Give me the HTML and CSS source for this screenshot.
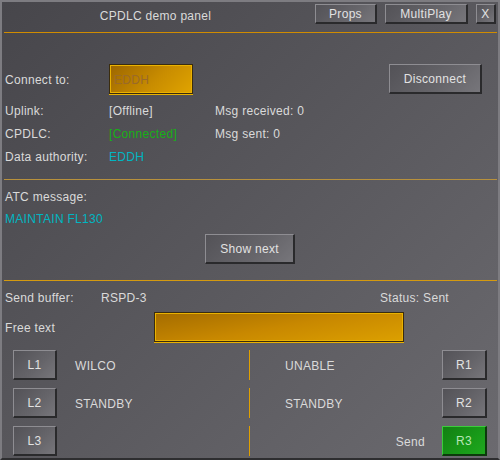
FILE: index.html
```html
<!DOCTYPE html>
<html>
<head>
<meta charset="utf-8">
<link rel="stylesheet" href="styles.css">
</head>
<body>
<div class="window">
  <div class="titlebar">
    <div class="title">CPDLC demo panel</div>
    <button class="btn btn-props">Props</button>
    <button class="btn btn-multi">MultiPlay</button>
    <button class="btn btn-x">X</button>
  </div>
  <div class="rule rule-main"></div>

  <div class="section conn">
    <div class="connect-row">
      <span class="label w104">Connect to:</span>
      <div class="field field-connect">EDDH</div>
      <span class="spacer"></span>
      <button class="btn btn-disc">Disconnect</button>
    </div>
    <div class="info-row">
      <span class="label w104">Uplink:</span>
      <span class="value w106">[Offline]</span>
      <span class="value">Msg received: 0</span>
    </div>
    <div class="info-row">
      <span class="label w104">CPDLC:</span>
      <span class="value w106 green">[Connected]</span>
      <span class="value">Msg sent: 0</span>
    </div>
    <div class="info-row">
      <span class="label w104">Data authority:</span>
      <span class="value cyan">EDDH</span>
    </div>
  </div>

  <div class="rule rule-sep"></div>

  <div class="section atc">
    <div class="text-row">ATC message:</div>
    <div class="text-row cyan">MAINTAIN FL130</div>
    <button class="btn btn-next">Show next</button>
  </div>

  <div class="rule rule-orange"></div>

  <div class="section send">
    <div class="buffer-row">
      <span class="label w96">Send buffer:</span>
      <span class="value">RSPD-3</span>
      <span class="spacer"></span>
      <span class="value status">Status: Sent</span>
    </div>
    <div class="free-row">
      <span class="label w149">Free text</span>
      <div class="field field-free"></div>
    </div>
    <div class="keys">
      <button class="btn key">L1</button>
      <span class="ktext left">WILCO</span>
      <span class="vsep"></span>
      <span class="ktext right">UNABLE</span>
      <button class="btn key">R1</button>

      <button class="btn key">L2</button>
      <span class="ktext left">STANDBY</span>
      <span class="vsep"></span>
      <span class="ktext right">STANDBY</span>
      <button class="btn key">R2</button>

      <button class="btn key">L3</button>
      <span class="ktext left"></span>
      <span class="vsep"></span>
      <span class="ktext send-label">Send</span>
      <button class="btn key key-green">R3</button>
    </div>
  </div>
</div>
</body>
</html>
```

FILE: styles.css
```css
* { box-sizing: border-box; }
html, body { margin: 0; padding: 0; }
body {
  width: 500px;
  height: 460px;
  font-family: "Liberation Sans", Arial, sans-serif;
  font-size: 12px;
  letter-spacing: 0.3px;
  color: #dadada;
  background: #2a2a2c;
}
.window {
  width: 500px;
  height: 460px;
  border: 2px solid #7d7c81;
  border-bottom-color: #2e2e30;
  background: linear-gradient(135deg, #47464b 0%, #59585d 50%, #6b6a6f 100%);
  display: flex;
  flex-direction: column;
}
.titlebar {
  height: 30px;
  display: flex;
  align-items: flex-start;
  padding: 2px 2px 0 0;
}
.title {
  flex: 1;
  text-align: center;
  line-height: 22px;
  padding-top: 1px;
  padding-right: 6px;
}
.btn {
  font-family: inherit;
  font-size: 12px;
  letter-spacing: 0.3px;
  color: #e2e2e2;
  background: linear-gradient(135deg, #535257 0%, #66656a 60%, #77767b 100%);
  border-style: solid;
  border-width: 1px 2px 2px 1px;
  border-color: #8e8d92 #2a2a2c #2a2a2c #8e8d92;
  padding: 0;
  margin: 0;
  cursor: default;
}
.btn-props { width: 62px; height: 20px; }
.btn-multi { width: 83px; height: 20px; margin-left: 8px; }
.btn-x { width: 20px; height: 20px; margin-left: 8px; }
.rule { height: 1px; margin: 0 1px 0 2px; flex: none; }
.rule-main { background: #d08c00; }
.rule-sep { background: #b8913c; margin-top: 12px; }
.rule-orange { background: #d49a10; margin-top: 16px; }

.section { padding-left: 3px; }
.conn { padding-top: 31px; }
.connect-row { display: flex; align-items: center; height: 30px; }
.connect-row .label { padding-top: 2px; }
.label, .value { white-space: nowrap; }
.w104 { width: 104px; flex: none; }
.w106 { width: 106px; flex: none; }
.w96 { width: 96px; flex: none; }
.w149 { width: 149px; flex: none; }
.spacer { flex: 1; }
.field {
  border: 1px solid #3a2c0e;
  box-shadow: inset 0 0 0 1px #eab200, 0 1px 0 #eab200;
}
.field-connect {
  width: 84px;
  height: 30px;
  background: linear-gradient(135deg, #9c6600 0%, #c88c00 55%, #e0a400 100%);
  color: #9a6a28;
  line-height: 28px;
  padding-left: 4px;
  padding-top: 1px;
}
.btn-disc { width: 93px; height: 30px; margin-right: 16px; }
.conn .connect-row + .info-row { margin-top: 4px; }
.info-row { display: flex; align-items: center; height: 23px; padding-top: 2px; }
.green { color: #16b016; }
.cyan { color: #00b6c2; }

.atc { padding-top: 5px; display: flex; flex-direction: column; align-items: flex-start; }
.text-row { height: 22px; line-height: 20px; padding-top: 2px; }
.btn-next { width: 90px; height: 30px; margin: 5px 0 0 200px; }

.send { padding-top: 5px; }
.buffer-row { display: flex; align-items: center; height: 22px; padding-right: 49px; padding-top: 2px; }
.free-row { display: flex; align-items: center; height: 30px; margin-top: 4px; }
.free-row .label { padding-top: 2px; }
.field-free {
  width: 250px;
  height: 30px;
  background: linear-gradient(170deg, #a46c00 0%, #c88800 50%, #dca000 100%);
}
.keys {
  margin-top: 8px;
  margin-left: -3px;
  padding: 0 11px;
  display: grid;
  grid-template-columns: 44px 1fr 1px 1fr 45px;
  grid-auto-rows: 30px;
  row-gap: 8px;
}
.key { height: 30px; }
.key-green {
  background: linear-gradient(135deg, #137f13 0%, #189a18 60%, #1fa81f 100%);
  border-color: #3ccc3c #0c3a0c #0c3a0c #3ccc3c;
  color: #b6e6b6;
}
.ktext { display: flex; align-items: center; white-space: nowrap; padding-top: 2px; }
.ktext.left { padding-left: 18px; }
.ktext.right { padding-left: 35px; }
.ktext.send-label { justify-content: flex-end; padding-right: 17px; }
.vsep { background: #e0a000; }
```
